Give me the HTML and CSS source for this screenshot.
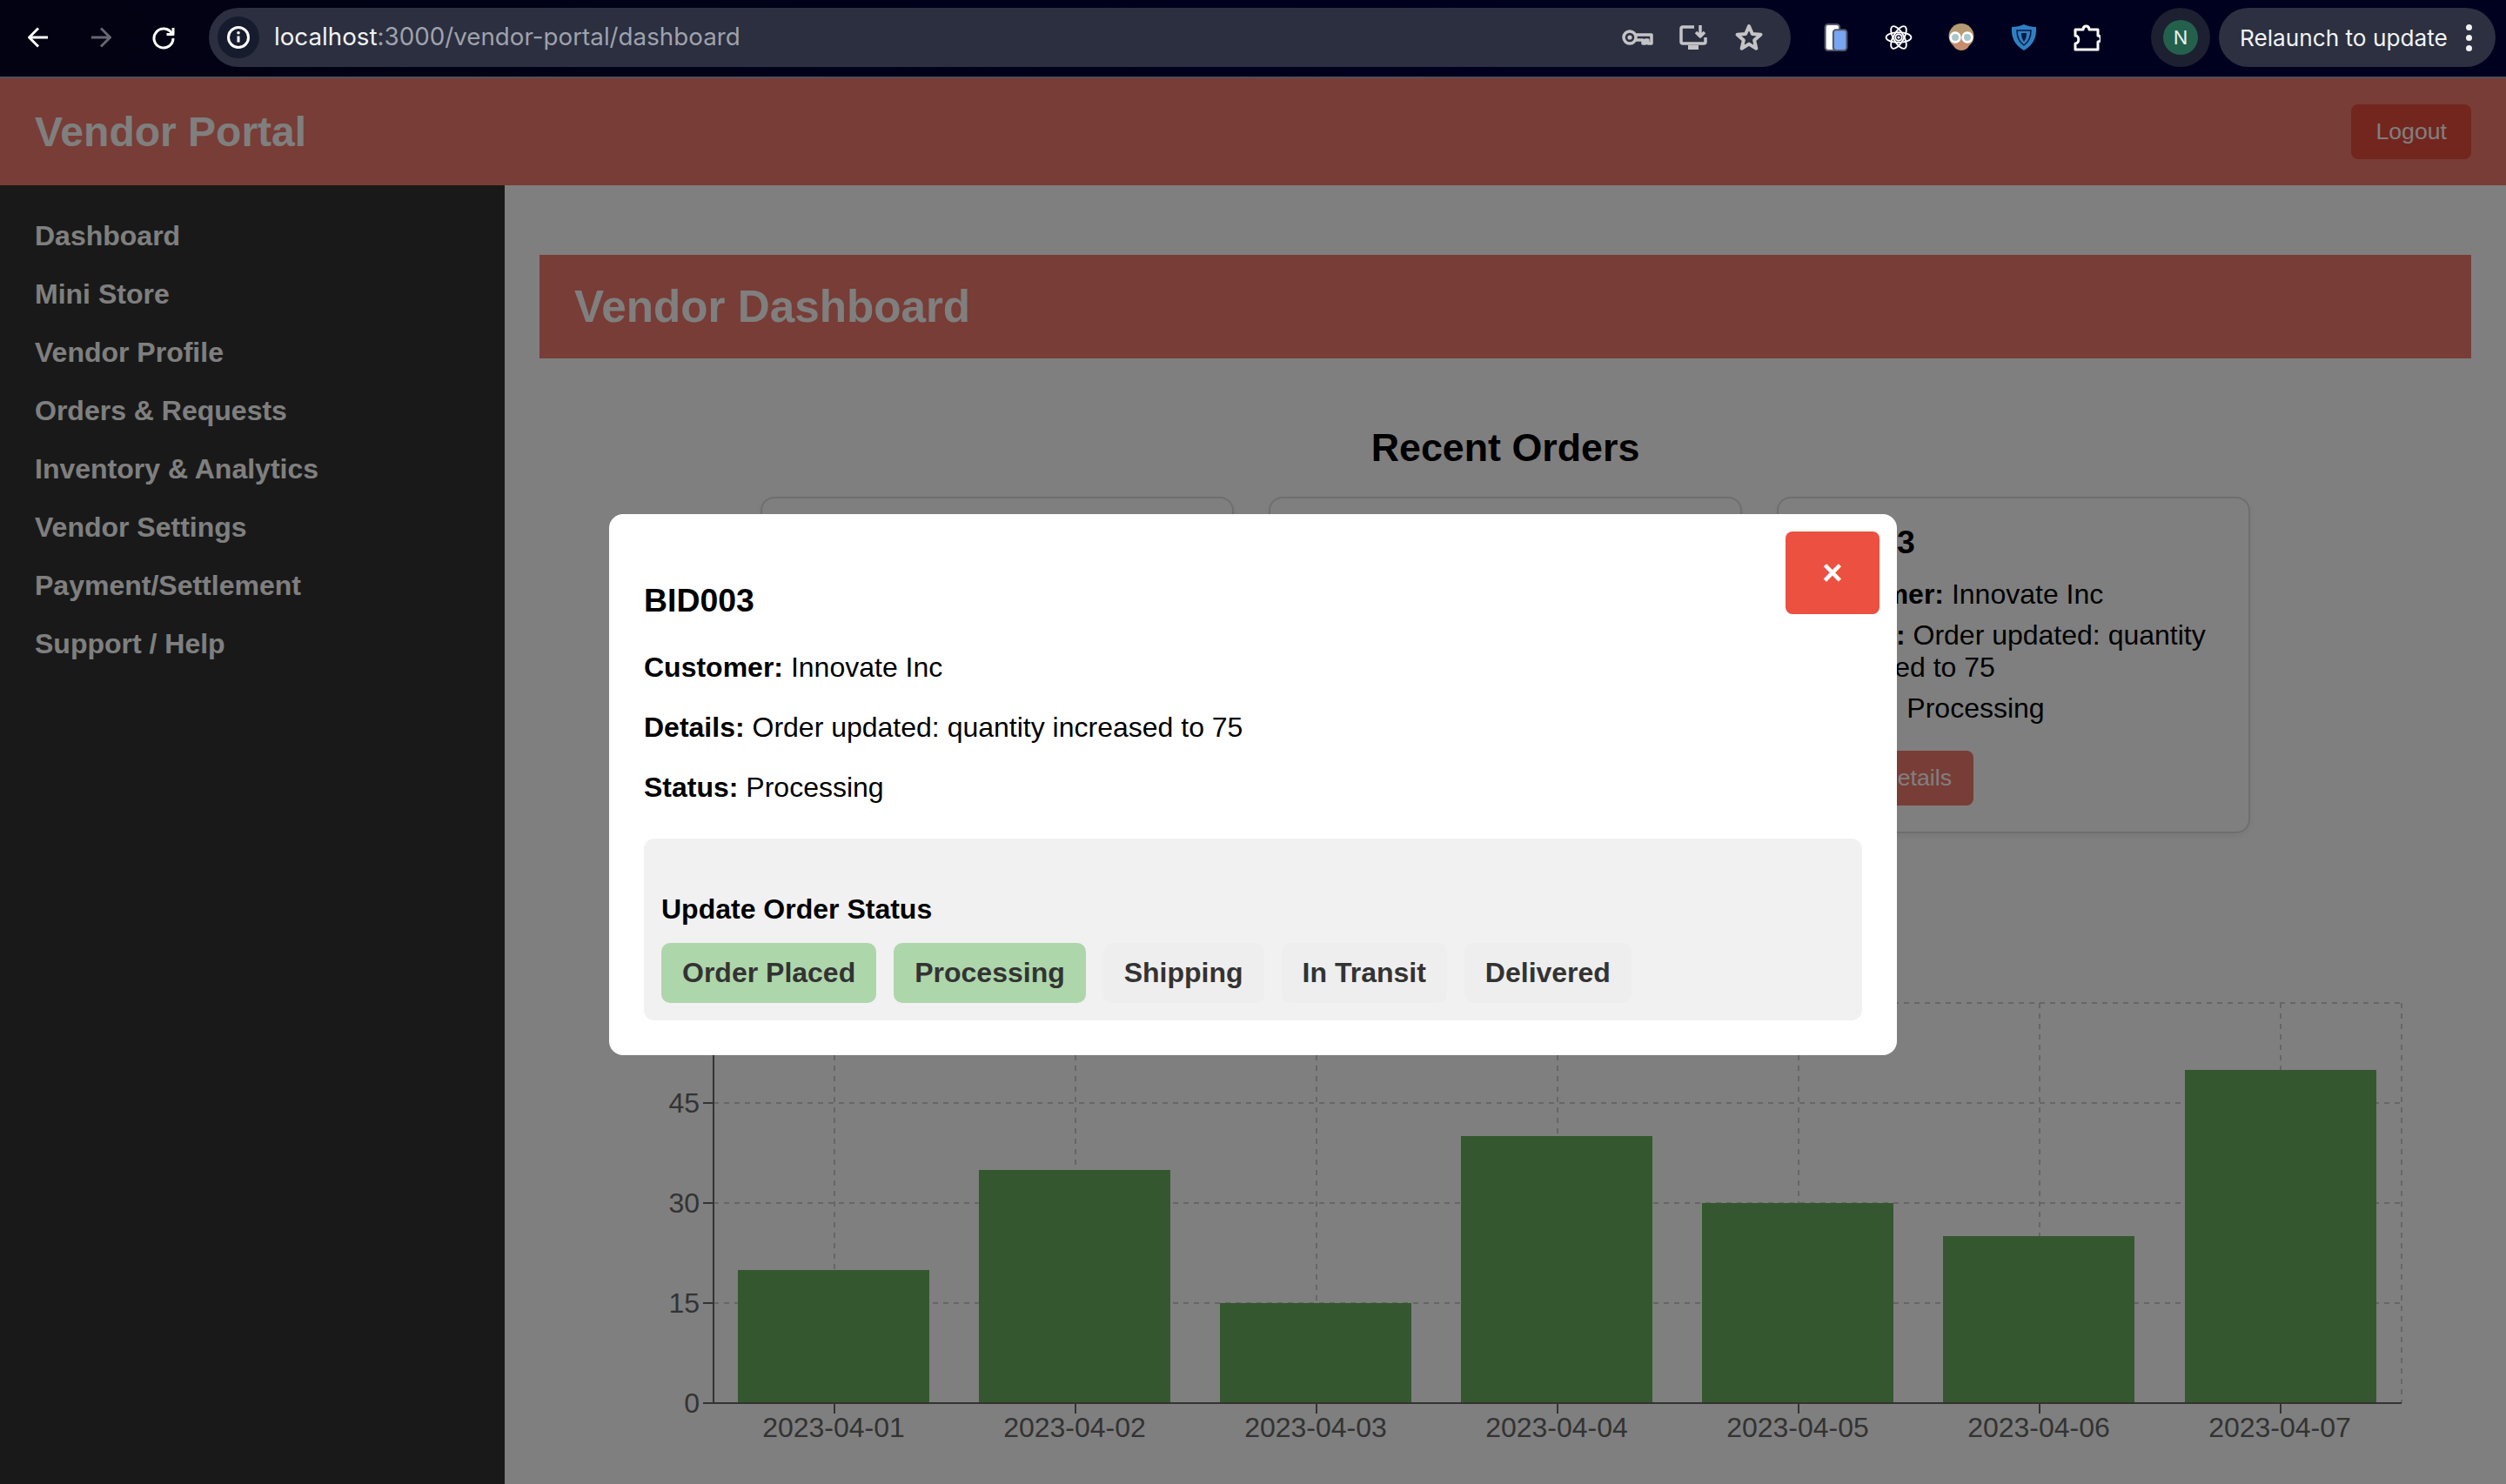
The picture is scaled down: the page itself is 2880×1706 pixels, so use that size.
FILE: index.html
```html
<!DOCTYPE html>
<html lang="en">
  <head>
    <meta charset="utf-8" />
    <title>Vendor Portal</title>
    <link rel="stylesheet" href="styles.css">
  </head>
  <body>
    <div class="browser-bar">
      <span class="tool"><svg class="ico" viewBox="0 0 28 28"><path class="line" d="M25 14H4M14 3.5 3.5 14 14 24.5"/></svg></span>
      <span class="tool dim"><svg class="ico" viewBox="0 0 28 28"><path class="line" d="M3 14h21M14 3.5 24.5 14 14 24.5"/></svg></span>
      <span class="tool"><svg class="ico" viewBox="0 0 28 28"><path class="line" d="M23.5 9.5A11 11 0 1 0 25 15"/><path class="line" d="M17.5 10.5H25V3"/></svg></span>

      <div class="url-pill">
        <span class="site-info"><svg class="ico" viewBox="0 0 28 28"><circle class="line" cx="14" cy="14" r="11.5"/><path class="line" d="M14 12.5v7"/><circle class="dot" cx="14" cy="8.7" r="1.8"/></svg></span>
        <span class="url"><span class="host">localhost</span>:3000/vendor-portal/dashboard</span>
        <span class="pill-tool"><svg class="key" viewBox="0 0 36 20"><circle class="grey-line" cx="9" cy="10" r="7"/><circle class="grey-dot" cx="9" cy="10" r="2.6"/><path class="grey-line" d="M16 7h18v10h-4v-4h-3v4h-3v-4h-8"/></svg></span>
        <span class="pill-tool"><svg class="install" viewBox="0 0 32 28"><path class="grey-line" d="M17 2H4a2 2 0 0 0-2 2v15a2 2 0 0 0 2 2h24a2 2 0 0 0 2-2v-5"/><path class="grey-fill" d="M10 23h12v5H10z"/><path class="grey-line" d="M24 0v12M19 8l5 5 5-5"/></svg></span>
        <span class="pill-tool"><svg class="star" viewBox="0 0 30 30"><path class="grey-line" d="M15 3.500 18.400 11.400 26.900 12.100 20.400 17.800 22.400 26.200 15 21.700 7.600 26.200 9.600 17.800 3.100 12.100 11.600 11.400Z"/></svg></span>
      </div>

      <div class="extensions">
        <span class="tool"><svg class="ico-lg" viewBox="0 0 26 31"><rect class="ext-back" x="1" y="1" width="16" height="29" rx="3"/><rect class="ext-front" x="10" y="7" width="15" height="23" rx="3"/></svg></span>
        <span class="tool"><svg class="ico-lg" viewBox="0 0 30 30"><g class="react"><ellipse cx="15" cy="15" rx="13.500" ry="5.500"/><ellipse cx="15" cy="15" rx="13.500" ry="5.500" transform="rotate(60 15 15)"/><ellipse cx="15" cy="15" rx="13.500" ry="5.500" transform="rotate(120 15 15)"/><circle cx="15" cy="15" r="3.500"/></g><circle class="dot" cx="15" cy="15" r="1.500"/></svg></span>
        <span class="tool"><svg class="ico-lg" viewBox="0 0 30 30"><circle class="hair" cx="15" cy="13.500" r="13.500"/><path class="skin" d="M5 17h20c0 7-4 12-10 12S5 24 5 17z"/><circle class="lens" cx="8.500" cy="15" r="5"/><circle class="lens" cx="21.500" cy="15" r="5"/></svg></span>
        <span class="tool"><svg class="ico-lg" viewBox="0 0 30 32"><path class="shield" d="M15 1c4 2 9 3 14 3 1 11-3 21-14 27C4 25 0 15 1 4c5 0 10-1 14-3z"/><path class="shield-mid" d="M7 8h16c0 7-2 13-8 17-6-4-8-10-8-17z"/><path class="shield-in" d="M12 11h6c0 4-1 7-3 10-2-3-3-6-3-10z"/></svg></span>
        <span class="tool"><svg class="ico-lg" viewBox="0 0 32 32"><path class="line" d="M3 7h9c0-5.500 7-5.500 7 0h10v7c4.500 0 4.500 7 0 7v9H3v-7c5 0 5-9 0-9z"/></svg></span>
      </div>

      <span class="avatar-ring"><span class="avatar">N</span></span>
      <div class="relaunch">
        <span>Relaunch to update</span>
        <span class="kebab"><i></i><i></i><i></i></span>
      </div>
    </div>

    <div class="app">
      <header class="top-header">
        <h1>Vendor Portal</h1>
        <button class="btn">Logout</button>
      </header>

      <div class="layout">
        <nav class="sidebar">
          <a href="#">Dashboard</a>
          <a href="#">Mini Store</a>
          <a href="#">Vendor Profile</a>
          <a href="#">Orders &amp; Requests</a>
          <a href="#">Inventory &amp; Analytics</a>
          <a href="#">Vendor Settings</a>
          <a href="#">Payment/Settlement</a>
          <a href="#">Support / Help</a>
        </nav>

        <main class="content">
          <div class="banner"><h2>Vendor Dashboard</h2></div>
          <h2 class="section-title">Recent Orders</h2>
          <div class="cards">
            <div class="card"></div>
            <div class="card"></div>
            <div class="card">
              <h3>BID003</h3>
              <p><strong>Customer:</strong> Innovate Inc</p>
              <p><strong>Details:</strong> Order updated: quantity increased to 75</p>
              <p><strong>Status:</strong> Processing</p>
              <button class="btn card-btn">View Details</button>
            </div>
          </div>

          <svg class="chart" viewBox="0 0 2220 560">
            <g class="grid">
              <path d="M200 23H2140M200 138H2140M200 253H2140M200 368H2140"/>
              <path d="M339 23V483M616 23V483M893 23V483M1170 23V483M1447 23V483M1724 23V483M2001 23V483M2140 23V483"/>
            </g>
            <g class="bars">
              <rect x="228" y="330" width="220" height="153"/>
              <rect x="505" y="215" width="220" height="268"/>
              <rect x="782" y="368" width="220" height="115"/>
              <rect x="1059" y="176" width="220" height="307"/>
              <rect x="1336" y="253" width="220" height="230"/>
              <rect x="1613" y="291" width="220" height="192"/>
              <rect x="1891" y="100" width="220" height="383"/>
            </g>
            <path class="axis" d="M200 23V483H2140M188 23H200M188 138H200M188 253H200M188 368H200M188 483H200M339 483V495M616 483V495M893 483V495M1170 483V495M1447 483V495M1724 483V495M2001 483V495"/>
            <g class="y-labels">
              <text x="184" y="34">60</text>
              <text x="184" y="149">45</text>
              <text x="184" y="264">30</text>
              <text x="184" y="379">15</text>
              <text x="184" y="494">0</text>
            </g>
            <g class="x-labels">
              <text x="338" y="522">2023-04-01</text>
              <text x="615" y="522">2023-04-02</text>
              <text x="892" y="522">2023-04-03</text>
              <text x="1169" y="522">2023-04-04</text>
              <text x="1446" y="522">2023-04-05</text>
              <text x="1723" y="522">2023-04-06</text>
              <text x="2000" y="522">2023-04-07</text>
            </g>
          </svg>
        </main>
      </div>

      <div class="overlay">
        <div class="modal">
          <button class="close-btn">×</button>
          <h3>BID003</h3>
          <p><strong>Customer:</strong> Innovate Inc</p>
          <p><strong>Details:</strong> Order updated: quantity increased to 75</p>
          <p><strong>Status:</strong> Processing</p>
          <div class="status-panel">
            <h4>Update Order Status</h4>
            <div class="status-steps">
              <button class="step done">Order Placed</button>
              <button class="step done">Processing</button>
              <button class="step">Shipping</button>
              <button class="step">In Transit</button>
              <button class="step">Delivered</button>
            </div>
          </div>
        </div>
      </div>
    </div>
  </body>
</html>
```

FILE: styles.css
```css
html,
body {
  margin: 0;
  height: 100%;
  overflow: hidden;
  font: 400 32px "Liberation Sans", Arial, sans-serif;
  background-color: white;
  color: black;
}

/* browser toolbar */
.browser-bar {
  display: flex;
  align-items: center;
  box-sizing: border-box;
  height: 90px;
  padding: 0 12px 2px 8px;
  background: linear-gradient(90deg, #020212, #00001f 60%);
  border-bottom: 2px solid #50505c;
  font-family: Inter, "Noto Sans", sans-serif;
}
.tool {
  display: flex;
  align-items: center;
  justify-content: center;
  flex: none;
  width: 72px;
}
.dim {
  opacity: 0.4;
}
.ico {
  width: 28px;
  height: 28px;
}
.ico-lg {
  width: 32px;
  height: 32px;
}
.line {
  fill: none;
  stroke: white;
  stroke-width: 3;
  stroke-linejoin: round;
}
.dot {
  fill: white;
}
.url-pill {
  display: flex;
  align-items: center;
  flex: none;
  box-sizing: border-box;
  width: 1818px;
  height: 68px;
  margin-left: 16px;
  padding: 0 16px 0 10px;
  border-radius: 34px;
  background-color: #2b2f40;
}
.site-info {
  display: flex;
  align-items: center;
  justify-content: center;
  width: 48px;
  height: 48px;
  border-radius: 50%;
  background-color: #161c2e;
}
.url {
  flex: 1;
  margin: 0 0 2px 17px;
  font-size: 27.75px;
  color: #a0a2ab;
}
.host {
  color: #f2f2f2;
}
.pill-tool {
  display: flex;
  align-items: center;
  justify-content: center;
  width: 64px;
}
.key {
  width: 36px;
  height: 20px;
}
.install {
  width: 32px;
  height: 28px;
}
.star {
  width: 34px;
  height: 34px;
}
.grey-line {
  fill: none;
  stroke: #c4c4c6;
  stroke-width: 3.5;
  stroke-linejoin: round;
}
.grey-dot,
.grey-fill {
  fill: #c4c4c6;
}
.extensions {
  display: flex;
  flex: none;
  margin-left: 16px;
}
.ext-back {
  fill: white;
  stroke: #55586a;
  stroke-width: 2;
}
.ext-front {
  fill: #78a6f5;
  stroke: #55586a;
  stroke-width: 2;
}
.react {
  fill: none;
  stroke: white;
  stroke-width: 1.8;
}
.hair {
  fill: #b59a73;
}
.skin {
  fill: #c48d6e;
}
.lens {
  fill: #a8c6cc;
  stroke: white;
  stroke-width: 2.500;
}
.shield {
  fill: #2f7fc4;
}
.shield-mid {
  fill: #2f7fc4;
  stroke: #0b1a3c;
  stroke-width: 1.5;
}
.shield-in {
  fill: #0b1a3c;
}
.avatar-ring {
  display: flex;
  align-items: center;
  justify-content: center;
  flex: none;
  width: 68px;
  height: 68px;
  margin-left: 38px;
  border-radius: 50%;
  background-color: #1d2030;
}
.avatar {
  width: 40px;
  height: 40px;
  border-radius: 50%;
  background-color: #24614d;
  color: #e8efec;
  font-size: 22px;
  line-height: 40px;
  text-align: center;
}
.relaunch {
  display: flex;
  align-items: center;
  flex: none;
  box-sizing: border-box;
  width: 318px;
  height: 68px;
  margin-left: 10px;
  padding-left: 24px;
  border-radius: 34px;
  background-color: #2c3040;
  color: #f2f2f2;
  font-size: 26.2px;
}
.kebab {
  display: flex;
  flex-direction: column;
  gap: 5px;
  margin-left: 21px;
}
.kebab i {
  width: 7px;
  height: 7px;
  border-radius: 50%;
  background-color: #f2f2f2;
}

/* page */
.app {
  position: relative;
  height: 1616px;
  overflow: hidden;
}
.top-header {
  display: flex;
  align-items: center;
  justify-content: space-between;
  height: 123px;
  padding: 0 40px;
  background-color: #f07a6c;
  color: white;
}
h1 {
  margin: 0;
  font-size: 48px;
}
.btn {
  padding: 16px 28px;
  border: 0;
  border-radius: 8px;
  background-color: #e74c3c;
  color: white;
  font: 400 26.67px "Liberation Sans", Arial, sans-serif;
}
.layout {
  display: flex;
  height: 1493px;
}
.sidebar {
  display: flex;
  flex-direction: column;
  flex: none;
  gap: 30px;
  box-sizing: border-box;
  width: 580px;
  padding: 40px;
  background-color: #333;
}
.sidebar a {
  color: white;
  font-weight: 700;
  text-decoration: none;
}
.content {
  flex: 1;
  min-width: 0;
  padding: 80px 40px 0;
}
.banner {
  padding: 30px 40px;
  background-color: #f07a6c;
  color: white;
}
.banner h2 {
  margin: 0;
  font-size: 51.2px;
}
.section-title {
  margin: 77px 0 31px;
  font-size: 44.8px;
  text-align: center;
}
.cards {
  display: flex;
  justify-content: center;
  gap: 40px;
}
.card {
  box-sizing: border-box;
  width: 544px;
  padding: 29px 30px 30px;
  border: 2px solid #ddd;
  border-radius: 16px;
  box-shadow: 0 4px 8px rgba(0, 0, 0, 0.06);
}
.card h3 {
  margin: 0 0 20px;
  font-size: 37.44px;
}
.card p {
  margin: 10px 0;
}
.card-btn {
  display: block;
  width: 194px;
  margin-top: 30px;
  padding: 16px 25px 16px 0;
  background-color: #f07a6c;
  text-align: right;
}
.chart {
  display: block;
  width: 2220px;
  height: 560px;
  margin-top: 172px;
  font-size: 32px;
}
.grid path {
  fill: none;
  stroke: #ccc;
  stroke-width: 2;
  stroke-dasharray: 6 6;
}
.bars rect {
  fill: #6aae60;
}
.axis {
  fill: none;
  stroke: #666;
  stroke-width: 2;
}
.y-labels text {
  fill: #666;
  text-anchor: end;
}
.x-labels text {
  fill: #666;
  text-anchor: middle;
}

/* order modal */
.overlay {
  position: absolute;
  inset: 0;
  display: flex;
  align-items: center;
  justify-content: center;
  box-sizing: border-box;
  padding-top: 8px;
  background-color: rgba(0, 0, 0, 0.5);
}
.modal {
  position: relative;
  box-sizing: border-box;
  width: 1480px;
  padding: 40px;
  border-radius: 16px;
  background-color: white;
}
.modal h3 {
  margin: 37.44px 0;
  font-size: 37.44px;
}
.modal p {
  margin: 32px 0;
}
.close-btn {
  position: absolute;
  top: 20px;
  right: 20px;
  width: 108px;
  height: 95px;
  padding: 0;
  border: 0;
  border-radius: 8px;
  background-color: #ec5040;
  color: white;
  font: 700 40px "Liberation Sans", Arial, sans-serif;
}
.status-panel {
  margin-top: 40px;
  padding: 20px;
  border-radius: 12px;
  background-color: #f1f1f1;
}
.status-panel h4 {
  margin: 42.67px 0 20px;
  font-size: 32px;
}
.status-steps {
  display: flex;
  gap: 20px;
}
.step {
  padding: 16px 24px;
  border: 0;
  border-radius: 10px;
  background-color: #eee;
  color: #333;
  font: 700 32px "Liberation Sans", Arial, sans-serif;
}
.step.done {
  background-color: #aed6ab;
}
```
